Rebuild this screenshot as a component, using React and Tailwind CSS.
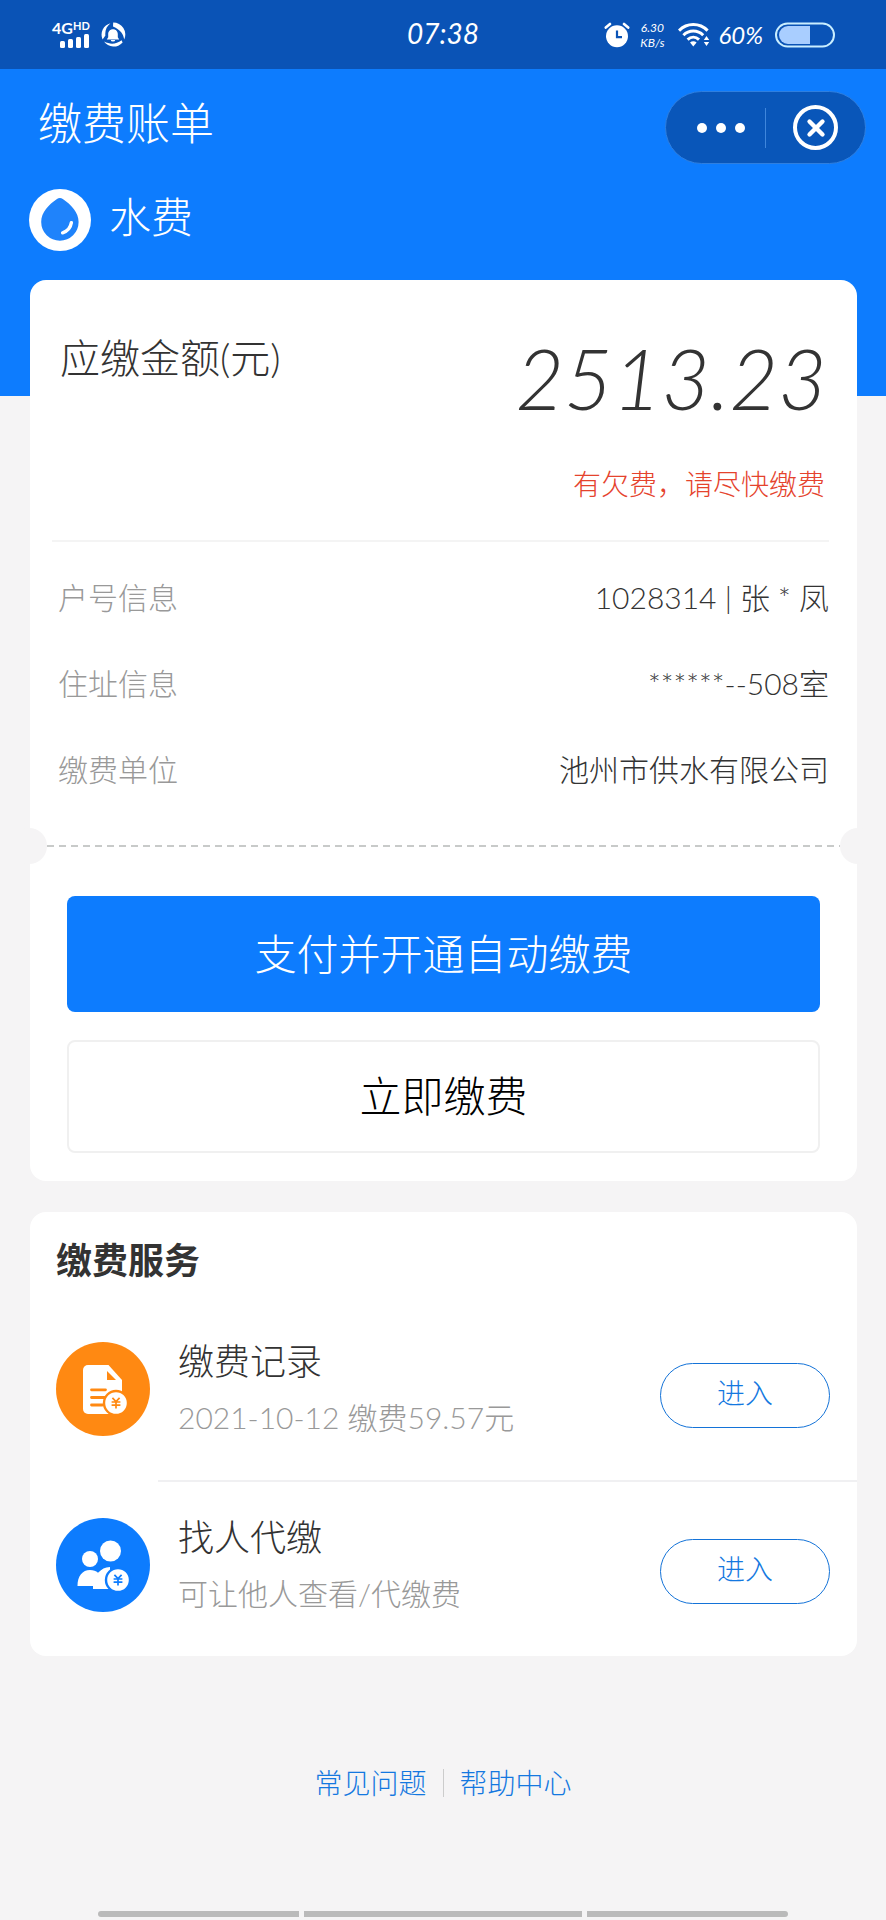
import { X } from 'lucide-react';

const billRows = [
  { label: '户号信息', value: '1028314 | 张 * 凤' },
  { label: '住址信息', value: '******--508室' },
  { label: '缴费单位', value: '池州市供水有限公司' },
];

const services = [
  { title: '缴费记录', desc: '2021-10-12 缴费59.57元', icon: RecordIcon },
  { title: '找人代缴', desc: '可让他人查看/代缴费', icon: FriendsIcon },
];

function SignalIcon() {
  return (
    <svg viewBox="0 0 30 14" className="w-[30px] h-[14px]" fill="currentColor">
      <rect x="0" y="7" width="5" height="7" rx="1.5" />
      <rect x="8" y="5" width="5" height="9" rx="1.5" />
      <rect x="16" y="3" width="5" height="11" rx="1.5" />
      <rect x="24" y="0" width="5" height="14" rx="1.5" />
    </svg>
  );
}

function BellRingIcon() {
  return (
    <svg viewBox="0 0 26 26" className="w-[26px] h-[26px]" fill="currentColor">
      <path d="M2.6 17.5A11.8 11.8 0 0 1 10.5 1.2C6.6 4.2 4.8 8.4 5.4 13.6Z" />
      <path d="M13.2 .6A12 12 0 0 1 24.2 17.6C23.6 12.2 20.6 7.6 13 4.4Z" />
      <path d="M4 19.6A12 12 0 0 0 22.6 20.6L21.6 18.2C16 22.4 10.4 22.6 4 19.6Z" />
      <path d="M13 7.2c3 0 4.8 2.2 4.8 4.8v3.2l1.4 2.2H6.8l1.4-2.2V12c0-2.6 1.8-4.8 4.8-4.8Z" />
      <path d="M10.8 18h4.4a2.2 1.6 0 0 1-4.4 0Z" />
    </svg>
  );
}

function AlarmIcon() {
  return (
    <svg viewBox="0 0 26 26" className="w-[26px] h-[26px]">
      <circle cx="13" cy="14.2" r="11" fill="#fff" />
      <path d="M1.8 5.6 6 2M24.2 5.6 20 2" stroke="#fff" strokeWidth="2.6" strokeLinecap="round" />
      <path d="M13 8.4v6.8h5" fill="none" stroke="#0a53b6" strokeWidth="2.2" />
    </svg>
  );
}

function WifiIcon() {
  return (
    <svg viewBox="0 0 32 24" className="w-8 h-6">
      <g fill="none" stroke="#fff" strokeWidth="3">
        <path d="M1 7.6C9-.4 21.6-.4 29.6 7.6" />
        <path d="M5.4 12.2c5.6-5.6 14.2-5.6 19.8 0" />
        <path d="M9.6 16.6c3.4-3.2 8-3.2 11.4 0" />
      </g>
      <path d="M12 19.4c2-1.6 4.6-1.6 6.6 0L15.3 23.4Z" fill="#fff" />
      <path d="m28.500 13 2.700 4h-5.400ZM28.500 23l2.700-4h-5.400Z" fill="#fff" />
    </svg>
  );
}

function BatteryIcon() {
  return (
    <svg viewBox="0 0 60 26" className="w-[60px] h-[26px]">
      <rect x="1" y="1.5" width="58" height="23" rx="11.5" fill="none" stroke="#c9eeff" strokeWidth="2" />
      <path d="M35 4v18H13a9 9 0 0 1 0-18Z" fill="#a9ceff" />
    </svg>
  );
}

function DropIcon() {
  return (
    <svg viewBox="0 0 62 62" className="w-[62px] h-[62px] shrink-0">
      <circle cx="31" cy="31" r="31" fill="#fff" />
      <path d="M28 10c1.800-1.300 4-1.300 5.800 0C42 15.600 49.600 23.200 49.600 33a18.700 18.700 0 0 1-37.400 0C12.200 23.200 19.800 15.600 28 10Z" fill="#1f83fb" />
      <path d="M42.400 33.600c-.8 5-4 8.800-8.800 10.200" fill="none" stroke="#fff" strokeWidth="3.400" strokeLinecap="round" />
    </svg>
  );
}

function YuanBadge({ color, cx, cy, r }) {
  return (
    <>
      <circle cx={cx} cy={cy} r={r} fill="#fff" stroke={color} strokeWidth="2.400" />
      <path
        transform={`translate(${cx} ${cy})`}
        d="M-3.600-5.200 0-1.400 3.600-5.200M-4.400-1h8.800M-4.400 2.200h8.800M0-1.400V5.400"
        fill="none"
        stroke={color}
        strokeWidth="1.700"
      />
    </>
  );
}

function RecordIcon() {
  return (
    <svg viewBox="0 0 94 94" className="w-[94px] h-[94px] shrink-0">
      <circle cx="47" cy="47" r="47" fill="#ff8912" />
      <path d="M32 23h20.500L66 38v29a5 5 0 0 1-5 5H32a5 5 0 0 1-5-5V28a5 5 0 0 1 5-5Z" fill="#fff" />
      <path d="M51 29v9h9Z" fill="#ff8912" />
      <path d="M35.500 47.800h14M35.500 55.500h14M35.500 63h11" stroke="#ff8912" strokeWidth="2.800" strokeLinecap="round" />
      <YuanBadge color="#ff8912" cx={60} cy={61} r={12} />
    </svg>
  );
}

function FriendsIcon() {
  return (
    <svg viewBox="0 0 94 94" className="w-[94px] h-[94px] shrink-0">
      <circle cx="47" cy="47" r="47" fill="#0d7cfe" />
      <g fill="#fff">
        <circle cx="34" cy="41" r="8" />
        <circle cx="54.500" cy="33" r="10.500" />
        <path d="M21.500 68c0-10 5-16 12.500-16 3.500 0 6 1 8 2.800 3.500-3.600 7-5.600 12-5.800V71H37v-3Z" />
      </g>
      <YuanBadge color="#0d7cfe" cx={62} cy={62} r={12} />
    </svg>
  );
}

function StatusBar() {
  return (
    <div className="h-[69px] bg-[#0a53b6] text-white font-normal grid grid-cols-[1fr_auto_1fr] items-center pb-1">
      <div className="flex items-center gap-2.5 pl-[52px] pt-1">
        <div className="flex flex-col items-end">
          <div className="flex items-start font-bold leading-3">
            <span className="text-[16px]">4G</span>
            <span className="text-[11px] leading-2">HD</span>
          </div>
          <SignalIcon />
        </div>
        <BellRingIcon />
      </div>
      <time className="text-[28px] leading-8 italic">07:38</time>
      <div className="flex items-center justify-end pr-[51px] pt-1">
        <AlarmIcon />
        <div className="flex flex-col ml-1.5 w-8 text-[12px] leading-[15px] italic text-center">
          <span>6.30</span>
          <span>KB/s</span>
        </div>
        <div className="ml-2.5">
          <WifiIcon />
        </div>
        <span className="ml-2 text-[24px] leading-6 italic">60%</span>
        <div className="ml-3">
          <BatteryIcon />
        </div>
      </div>
    </div>
  );
}

function Header() {
  return (
    <header className="h-[327px] bg-[#0d7cfe] text-white pt-[22px]">
      <div className="flex justify-between pl-[38px] pr-5">
        <h1 className="text-[44px] leading-16">缴费账单</h1>
        <div className="flex items-center w-[201px] h-[73px] rounded-full bg-[#0956b9] border border-[#2f7fdf]">
          <button aria-label="更多" className="w-[99px] h-full flex items-center justify-end gap-[9px] pr-5">
            <span className="w-2.5 h-2.5 rounded-full bg-white" />
            <span className="w-2.5 h-2.5 rounded-full bg-white" />
            <span className="w-2.5 h-2.5 rounded-full bg-white" />
          </button>
          <span className="w-px h-10 bg-[#3f86dc]" />
          <button aria-label="关闭" className="flex-1 h-full flex items-center justify-center">
            <span className="w-[45px] h-[45px] rounded-full border-4 border-white flex items-center justify-center">
              <X className="w-[26px] h-[26px]" strokeWidth={4} />
            </span>
          </button>
        </div>
      </div>
      <div className="flex gap-[18px] pl-[29px] mt-[25px]">
        <DropIcon />
        <h2 className="text-[42px] leading-14">水费</h2>
      </div>
    </header>
  );
}

function BillCard() {
  return (
    <section className="bg-white rounded-2xl pt-14 pb-7">
      <div className="flex justify-between pl-[30px] pr-[30px] text-[#333]">
        <h3 className="text-[40px] leading-11">应缴金额(元)</h3>
        <p className="text-[84px] leading-[84px] font-light italic">2513.23</p>
      </div>
      <p className="mt-11 pr-8 text-right text-[28px] leading-10 text-[#e5432d]">有欠费，请尽快缴费</p>
      <hr className="mt-9 ml-[22px] mr-7 border-t-2 border-[#f4f4f4]" />

      <dl className="mt-3 pl-7 pr-7 text-[30px]">
        {billRows.map((row) => (
          <div key={row.label} className="flex items-center justify-between h-[86px]">
            <dt className="text-[#999]">{row.label}</dt>
            <dd className="text-[#333]">{row.value}</dd>
          </div>
        ))}
      </dl>

      {/* Ticket tear line */}
      <div className="relative mt-[33px] mx-[17px] h-0.5 bg-[repeating-linear-gradient(90deg,#c8cac9_0,#c8cac9_7px,transparent_7px,transparent_12px)]">
        <span className="absolute -left-9 -top-[17px] w-9 h-9 rounded-full bg-[#f5f4f5]" />
        <span className="absolute -right-9 -top-[17px] w-9 h-9 rounded-full bg-[#f5f4f5]" />
      </div>

      <div className="flex flex-col gap-7 mt-[49px] px-[37px] text-[42px]">
        <button className="h-[116px] rounded-lg bg-[#0d7cfe] text-white">支付并开通自动缴费</button>
        <button className="h-[113px] rounded-lg border-2 border-[#f0f0f0] text-black">立即缴费</button>
      </div>
    </section>
  );
}

function ServiceCard() {
  return (
    <section className="mt-[31px] bg-white rounded-2xl pt-6">
      <h3 className="pl-[26px] text-[36px] leading-12 font-bold text-[#333]">缴费服务</h3>
      <ul className="mt-5">
        {services.map((item, i) => (
          <li key={item.title}>
            {i > 0 && <hr className="ml-32 -mb-0.5 border-t-2 border-[#f0f0f2]" />}
            <div className="flex items-center h-44 pb-1.5 pl-[26px] pr-[27px]">
              <item.icon />
              <div className="flex-1 ml-7 leading-14">
                <h4 className="text-[36px] leading-14 text-[#333]">{item.title}</h4>
                <p className="text-[30px] leading-14 text-[#999]">{item.desc}</p>
              </div>
              <button className="w-[170px] h-[65px] mt-3 pb-1 rounded-full border border-[#1473d8] text-[28px] text-[#1478e0]">
                进入
              </button>
            </div>
          </li>
        ))}
      </ul>
    </section>
  );
}

export default function App() {
  return (
    <div className="min-h-screen flex flex-col bg-[#f5f4f5] font-light font-['Lato','Noto_Sans_CJK_SC',sans-serif]">
      <StatusBar />
      <Header />
      <main className="-mt-[116px] pl-[30px] pr-[29px]">
        <BillCard />
        <ServiceCard />
      </main>

      <footer className="mt-[107px] flex items-center justify-center text-[28px] leading-10 text-[#1478e0]">
        <a href="#faq">常见问题</a>
        <span className="w-px h-7 mx-4 bg-[#ccc]" />
        <a href="#help">帮助中心</a>
      </footer>

      {/* System navigation hint bars */}
      <div className="mt-auto mb-[3px] px-[98px] grid grid-cols-[201fr_278fr_201fr] gap-[5px]">
        <span className="h-1.5 rounded-l-full bg-[#bababa]" />
        <span className="h-1.5 bg-[#bababa]" />
        <span className="h-1.5 rounded-r-full bg-[#bababa]" />
      </div>
    </div>
  );
}
